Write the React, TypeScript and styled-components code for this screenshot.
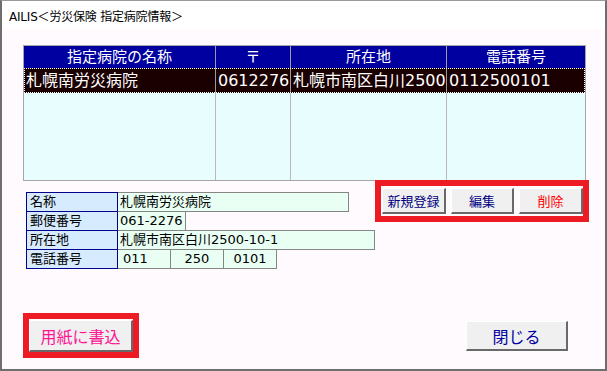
import styled, { createGlobalStyle } from "styled-components";

const GlobalStyle = createGlobalStyle`
  html, body {
    margin: 0;
    padding: 0;
    background: #ffffff;
  }
  * {
    box-sizing: border-box;
  }
`;

const FONT = `"DejaVu Sans", "Noto Sans CJK JP", sans-serif`;

// Window
const Frame = styled.div`
  width: 607px;
  height: 371px;
  border: 2px solid #6e6e6e;
  border-top: 1px solid #9a9a9a;
  display: flex;
  flex-direction: column;
  font-family: ${FONT};
  background: #fefafe;
  overflow: hidden;
`;

const TitleBar = styled.div`
  height: 28px;
  flex: none;
  display: flex;
  align-items: center;
  padding-left: 7px;
  background: #ffffff;
  font-size: 12px;
  color: #000;
  letter-spacing: -0.2px;
`;

const Body = styled.div`
  flex: 1;
  padding: 16px 16px 0 21px;
  display: flex;
  flex-direction: column;
`;

// Hospital list grid
const COLS = "192px 75px 156px 138px";

const ListBox = styled.div`
  width: 563px;
  height: 136px;
  border: 1px solid #a6a6a6;
  display: flex;
  flex-direction: column;
  flex: none;
`;

const HeaderRow = styled.div`
  display: grid;
  grid-template-columns: ${COLS};
  height: 22px;
  background: #0000a0;
`;

const HeaderCell = styled.div`
  color: #ffffff;
  font-size: 15px;
  line-height: 22px;
  text-align: center;
  border-right: 1px solid #9c9c9c;
  white-space: nowrap;
  overflow: hidden;
  &:last-child {
    border-right: none;
  }
`;

const SelectedRow = styled.div`
  display: grid;
  grid-template-columns: ${COLS};
  height: 25px;
  background: #1a0000;
  outline: 1px dotted #ffffff;
  outline-offset: -1px;
`;

const RowCell = styled.div`
  color: #ffffff;
  font-size: 16px;
  line-height: 25px;
  padding-left: 2px;
  border-right: 1px solid #9c9c9c;
  white-space: nowrap;
  overflow: hidden;
  &:last-child {
    border-right: none;
  }
`;

const FillerRow = styled.div`
  flex: 1;
  display: grid;
  grid-template-columns: ${COLS};
  background: #e7fdfe;
`;

const FillerCell = styled.div`
  border-right: 1px solid #b9b9b9;
  &:last-child {
    border-right: none;
  }
`;

// Middle area
const MiddleRow = styled.div`
  display: flex;
  align-items: flex-start;
  margin-top: -1px;
  height: 88px;
  flex: none;
`;

const InfoTable = styled.div`
  margin: 12px 0 0 3px;
  display: flex;
  flex-direction: column;
`;

const InfoRow = styled.div`
  display: flex;
  height: 20px;
  & + & {
    margin-top: -1px;
  }
`;

const Label = styled.div`
  width: 92px;
  height: 20px;
  border: 1px solid #00008b;
  background: #d6ebfd;
  font-size: 13px;
  line-height: 18px;
  padding-left: 3px;
  color: #000;
  position: relative;
  z-index: 1;
`;

const Value = styled.div<{ $w: number; $align?: string; $pad?: number }>`
  width: ${(p) => p.$w}px;
  height: 20px;
  margin-left: -1px;
  border: 1px solid #858585;
  background: #e9fff3;
  font-size: 13px;
  line-height: 18px;
  padding-left: ${(p) => p.$pad ?? 2}px;
  text-align: ${(p) => p.$align ?? "left"};
  color: #000;
  white-space: nowrap;
  overflow: hidden;
`;

const RedBox = styled.div`
  border: 6px solid #ed1c24;
  display: flex;
  flex: none;
`;

const ActionGroup = styled(RedBox)`
  margin-left: auto;
  width: 214px;
  height: 42px;
  padding: 2px 0 0 1px;
  gap: 5px;
`;

const Button = styled.button<{ $w: number; $h: number; $color: string; $size: number }>`
  width: ${(p) => p.$w}px;
  height: ${(p) => p.$h}px;
  flex: none;
  padding: 0;
  margin: 0;
  background: #f0f0f0;
  border-style: solid;
  border-width: 1px 2px 2px 1px;
  border-color: #ffffff #696969 #696969 #ffffff;
  color: ${(p) => p.$color};
  font-family: ${FONT};
  font-size: ${(p) => p.$size}px;
  cursor: pointer;
  white-space: nowrap;
`;

// Bottom area
const BottomRow = styled.div`
  display: flex;
  justify-content: space-between;
  align-items: flex-start;
  margin-top: 45px;
  padding-right: 21px;
`;

const PrintBox = styled(RedBox)`
  width: 116px;
  height: 45px;
  padding-top: 1px;
`;

const CloseWrap = styled.div`
  margin-top: 8px;
`;

const columns = ["指定病院の名称", "〒", "所在地", "電話番号"];
const selected = ["札幌南労災病院", "0612276", "札幌市南区白川2500", "0112500101"];

export default function App() {
  return (
    <>
      <GlobalStyle />
      <Frame>
        <TitleBar>AILIS＜労災保険 指定病院情報＞</TitleBar>
        <Body>
          <ListBox>
            <HeaderRow>
              {columns.map((c) => (
                <HeaderCell key={c}>{c}</HeaderCell>
              ))}
            </HeaderRow>
            <SelectedRow>
              {selected.map((v, i) => (
                <RowCell key={i}>{v}</RowCell>
              ))}
            </SelectedRow>
            <FillerRow>
              {columns.map((c) => (
                <FillerCell key={c} />
              ))}
            </FillerRow>
          </ListBox>

          <MiddleRow>
            <InfoTable>
              <InfoRow>
                <Label>名称</Label>
                <Value $w={232}>札幌南労災病院</Value>
              </InfoRow>
              <InfoRow>
                <Label>郵便番号</Label>
                <Value $w={69}>061-2276</Value>
              </InfoRow>
              <InfoRow>
                <Label>所在地</Label>
                <Value $w={258}>札幌市南区白川2500-10-1</Value>
              </InfoRow>
              <InfoRow>
                <Label>電話番号</Label>
                <Value $w={54} $pad={5}>011</Value>
                <Value $w={54} $align="center" $pad={0}>250</Value>
                <Value $w={54} $align="center" $pad={0}>0101</Value>
              </InfoRow>
            </InfoTable>

            <ActionGroup>
              <Button $w={64} $h={26} $color="#000080" $size={13}>新規登録</Button>
              <Button $w={63} $h={26} $color="#000080" $size={13}>編集</Button>
              <Button $w={64} $h={26} $color="#ff0000" $size={13}>削除</Button>
            </ActionGroup>
          </MiddleRow>

          <BottomRow>
            <PrintBox>
              <Button $w={104} $h={32} $color="#ff1493" $size={16}>用紙に書込</Button>
            </PrintBox>
            <CloseWrap>
              <Button $w={102} $h={30} $color="#0000a0" $size={16}>閉じる</Button>
            </CloseWrap>
          </BottomRow>
        </Body>
      </Frame>
    </>
  );
}
